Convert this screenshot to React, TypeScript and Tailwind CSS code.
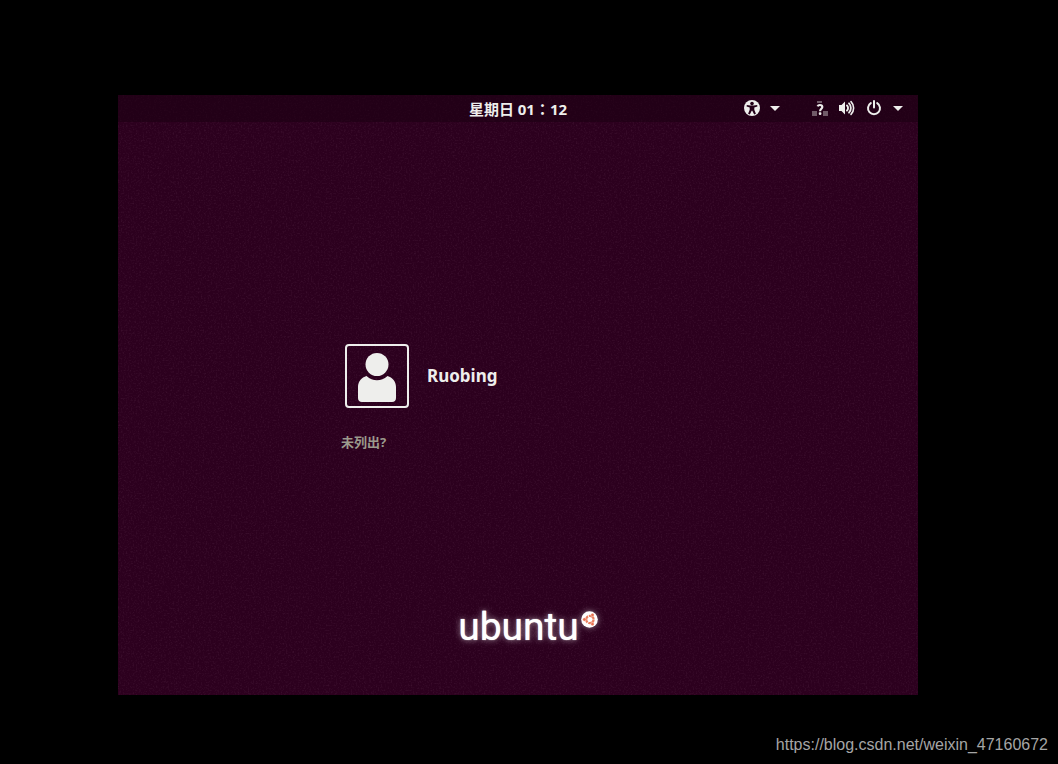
import { ReactNode } from "react";

const UI_FONT = "font-['Noto_Sans','Noto_Sans_CJK_SC',sans-serif]";

function Grain() {
  return (
    <svg className="absolute inset-0 w-full h-full opacity-10" aria-hidden="true">
      <filter id="grain">
        <feTurbulence type="fractalNoise" baseFrequency="0.6" numOctaves="2" seed="4" />
        <feColorMatrix values="0 0 0 0 0.55  0 0 0 0 0.3  0 0 0 0 0.45  2.4 0 0 0 -1.15" />
      </filter>
      <rect width="100%" height="100%" filter="url(#grain)" />
    </svg>
  );
}

function Caret() {
  return (
    <svg width="10" height="5" viewBox="0 0 10 5" fill="currentColor">
      <path d="M0 0h10L5 5z" />
    </svg>
  );
}

function AccessIcon() {
  return (
    <svg width="16" height="16" viewBox="0 0 16 16">
      <circle cx="8" cy="8" r="8" fill="currentColor" />
      <g fill="#230018">
        <circle cx="8" cy="3.6" r="1.8" />
        <path d="M2.800 5l3.500.6h3.400l3.500-.6.2 1.500-3.100 1v2.200l1.600 4-1.700.7L8.300 10.800h-.6l-1.900 3.600-1.700-.7 1.600-4V7.500l-3.100-1z" />
      </g>
    </svg>
  );
}

function NetworkIcon() {
  return (
    <svg width="16" height="16" viewBox="0 0 16 16">
      <g fill="#eeeeec" opacity="0.38">
        <rect x="5" y="1" width="5" height="2" />
        <rect x="0" y="11" width="5" height="5" />
        <rect x="11" y="11" width="5" height="5" />
      </g>
      <path
        d="M5.600 6.300C6 5.300 6.900 5 7.900 5c1.500 0 2.400.8 2.400 2 0 1.700-2.200 1.800-2.200 4.200"
        fill="none"
        stroke="currentColor"
        strokeWidth="2.200"
      />
      <rect x="6.800" y="12.300" width="2.600" height="2.600" rx="0.800" fill="currentColor" />
    </svg>
  );
}

function VolumeIcon() {
  return (
    <svg width="16" height="16" viewBox="0 0 16 16">
      <path d="M0 5h2.500L6 1.500v13L2.500 11H0z" fill="currentColor" />
      <g fill="none" stroke="currentColor" strokeLinecap="round">
        <path d="M8 5.500c1.400 1.300 1.400 3.700 0 5" strokeWidth="1.900" />
        <path d="M10 3.300c2.500 2.600 2.500 6.800 0 9.400" strokeWidth="1.800" />
        <path d="M12 1.600c3.500 3.700 3.500 9.100 0 12.800" strokeWidth="1.600" />
      </g>
    </svg>
  );
}

function PowerIcon() {
  return (
    <svg width="16" height="16" viewBox="0 0 16 16" fill="none" stroke="currentColor" strokeWidth="2">
      <path d="M4.800 3.100a6 6 0 1 0 6.400 0" strokeLinecap="round" />
      <path d="M8 1v6.500" strokeLinecap="round" />
    </svg>
  );
}

function Avatar() {
  return (
    <svg width="60" height="60" viewBox="0 0 60 60" fill="#eeeeec">
      <circle cx="30" cy="18.500" r="11.500" />
      <path d="M19.500 30C23 33 26 34.300 30 34.300S37 33 40.500 30C45.500 31.500 49 35.500 49 41v11c0 2.500-1.500 4-4 4H15c-2.500 0-4-1.500-4-4V41c0-5.500 3.500-9.500 8.500-11z" />
    </svg>
  );
}

function CircleOfFriends() {
  return (
    <svg width="17" height="17" viewBox="0 0 17 17" className="drop-shadow-[0_0_3px_rgba(255,255,255,0.5)]">
      <circle cx="8.500" cy="8.500" r="8.300" fill="#fff" />
      <circle
        cx="8.900"
        cy="8.500"
        r="3.700"
        fill="none"
        stroke="#ea7f5f"
        strokeWidth="2.200"
        strokeDasharray="6.850 0.900"
        strokeDashoffset="-0.450"
      />
      <g fill="#e8704f" stroke="#fff" strokeWidth="0.400">
        <circle cx="3.400" cy="8.500" r="1.700" />
        <circle cx="11.500" cy="3.900" r="1.700" />
        <circle cx="11.500" cy="13.100" r="1.700" />
      </g>
    </svg>
  );
}

function PanelButton({ label, className, children }: { label: string; className?: string; children: ReactNode }) {
  return (
    <button type="button" aria-label={label} className={`flex items-center ${className ?? ""}`}>
      {children}
    </button>
  );
}

export default function App() {
  return (
    <div className={`min-h-screen flex flex-col bg-black pt-[95px] text-[#eeeeec] ${UI_FONT}`}>
      <main className="relative flex-1 flex flex-col ml-[118px] mr-[140px] bg-[#2c001e]">
        <Grain />

        {/* Top panel */}
        <header className="relative grid grid-cols-[1fr_auto_1fr] items-center h-[27px] px-[15px] bg-[#1c0013]/60">
          <span />
          <time className="text-[15px] font-bold leading-5">
            星期日 01<span className="font-['Noto_Sans_CJK_TC',sans-serif]" lang="zh-TW">：</span>12
          </time>
          <div className="flex items-center justify-end gap-8 pb-px">
            <PanelButton label="Accessibility" className="gap-[10px]">
              <AccessIcon />
              <Caret />
            </PanelButton>
            <PanelButton label="System" className="gap-[11px]">
              <NetworkIcon />
              <VolumeIcon />
              <PowerIcon />
              <Caret />
            </PanelButton>
          </div>
        </header>

        {/* User list */}
        <section className="relative flex-1 flex flex-col justify-center pt-[74px]">
          <div className="w-full max-w-[354px] mx-auto">
            <button type="button" className="flex items-center gap-[18px] ml-1 text-left">
              <span className="w-16 h-16 border-2 border-[#eeeeec] rounded-[4px]">
                <Avatar />
              </span>
              <span className="text-[17px] font-bold">Ruobing</span>
            </button>
            <button type="button" className="block mt-6 text-[13px] leading-5 font-bold text-[#9b9a8c]">
              未列出?
            </button>
          </div>
        </section>

        <footer className="relative flex justify-center items-start gap-0.5 h-24 pl-5">
          <span className="font-['Roboto',sans-serif] text-[39px] leading-[56px] text-white [text-shadow:0_0_1px_#fff,0_0_6px_rgba(255,255,255,0.6)]">
            ubuntu
          </span>
          <span className="pt-3">
            <CircleOfFriends />
          </span>
        </footer>
      </main>

      <p className="h-[69px] pt-[38px] pr-[10px] text-right font-['Liberation_Sans',sans-serif] text-base text-[#a5a5a5]">
        <a href="https://blog.csdn.net/weixin_47160672">https://blog.csdn.net/weixin_47160672</a>
      </p>
    </div>
  );
}
